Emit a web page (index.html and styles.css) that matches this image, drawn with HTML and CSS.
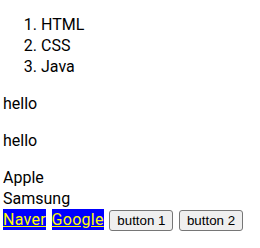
FILE: index.html
```html
<!DOCTYPE html>
<html>
<head>
<meta charset="utf-8">
<link rel="stylesheet" href="styles.css">
</head>
<body>
<ol class="langs">
  <li>HTML</li>
  <li>CSS</li>
  <li>Java</li>
</ol>
<p class="para">hello</p>
<p class="para">hello</p>
<div class="line">Apple</div>
<div class="line">Samsung</div>
<div class="line row"><a class="link" href="#">Naver</a> <a class="link" href="#">Google</a> <button class="btn" type="button">button 1</button> <button class="btn" type="button">button 2</button></div>
</body>
</html>
```
FILE: styles.css
```css
html, body {
  background: #ffffff;
}
body {
  margin: 0 3px;
  font-family: Roboto, "Liberation Sans", sans-serif;
  font-size: 16px;
  line-height: 21px;
  color: #000000;
}
.langs {
  margin: 14px 0 16px;
  padding-left: 38px;
}
.para {
  margin: 16px 0;
}
.line {
  margin: 0;
}
.row {
  word-spacing: 1.5px;
}
.link {
  display: inline-block;
  line-height: 21px;
  letter-spacing: 0.3px;
  word-spacing: normal;
  background: #0000ff;
  color: #ffff00;
  text-decoration: underline;
}
.btn {
  font-family: "Liberation Sans", Arial, sans-serif;
  font-size: 13.333px;
  line-height: normal;
  word-spacing: normal;
  padding: 2px 7px;
  border: 1px solid #767676;
  border-radius: 3px;
  background: #efefef;
  color: #000000;
  vertical-align: baseline;
  margin: 0;
}
```
